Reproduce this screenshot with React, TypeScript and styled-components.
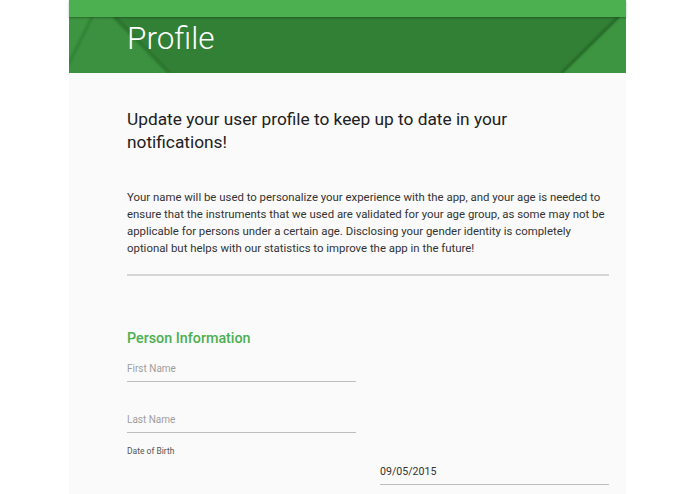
import React from 'react';
import styled, { createGlobalStyle } from 'styled-components';

const GlobalStyle = createGlobalStyle`
  html, body {
    margin: 0;
    padding: 0;
    background: #ffffff;
    font-family: Roboto, "Liberation Sans", Arial, sans-serif;
  }
`;

const Page = styled.div`
  width: 557px;
  margin-left: 69px;
  min-height: 494px;
  background: #fafafa;
  display: flex;
  flex-direction: column;
`;

const TopBar = styled.div`
  height: 17px;
  background: #4caf50;
  box-shadow: 0 1px 2px rgba(0, 0, 0, 0.3);
  position: relative;
  z-index: 2;
`;

const Header = styled.header`
  position: relative;
  height: 56px;
  background: #327f36;
  display: flex;
  align-items: center;
  padding-left: 58px;
  overflow: hidden;
`;

const HeaderArt = styled.svg`
  position: absolute;
  left: 0;
  top: 0;
  width: 557px;
  height: 56px;
`;

const Title = styled.h1`
  position: relative;
  margin: 0 0 14px;
  font-size: 31.5px;
  font-weight: 300;
  color: #ffffff;
`;

const Body = styled.main`
  padding: 35px 17px 0 58px;
  display: flex;
  flex-direction: column;
`;

const Lead = styled.h2`
  margin: 0;
  font-size: 17.3px;
  line-height: 23px;
  font-weight: 400;
  color: #212121;
  padding-right: 30px;
`;

const Intro = styled.p`
  margin: 35px 0 0;
  font-size: 11.4px;
  line-height: 17px;
  color: #333333;
`;

const Divider = styled.hr`
  margin: 17px 0 0;
  border: none;
  height: 2px;
  background: #d6d6d6;
`;

const SectionTitle = styled.h3`
  margin: 52px 0 0;
  font-size: 14.3px;
  line-height: 20px;
  font-weight: 500;
  color: #4caf50;
`;

const Fields = styled.div`
  display: grid;
  grid-template-columns: 229px 229px;
  column-gap: 24px;
  margin-top: 14px;
`;

const Field = styled.div<{ $col?: number; $row: number; $gap?: number; $filled?: boolean }>`
  grid-column: ${(p) => p.$col ?? 1};
  grid-row: ${(p) => p.$row};
  margin-top: ${(p) => p.$gap ?? 0}px;
  font-size: ${(p) => (p.$filled ? 10.6 : 10)}px;
  line-height: 14px;
  padding-bottom: 5px;
  border-bottom: 1px solid #bdbdbd;
  color: ${(p) => (p.$filled ? '#333333' : '#9e9e9e')};
`;

const SmallLabel = styled.div`
  grid-column: 1;
  grid-row: 3;
  margin-top: 12px;
  font-size: 8.5px;
  line-height: 12px;
  color: #555555;
`;

export default function App() {
  return (
    <>
      <GlobalStyle />
      <Page>
        <TopBar />
        <Header>
          <HeaderArt viewBox="0 0 557 56" preserveAspectRatio="none">
            <defs>
              <filter id="soft" x="-20%" y="-20%" width="140%" height="140%">
                <feGaussianBlur stdDeviation="1" />
              </filter>
            </defs>
            <polygon points="0,0 46,0 101,56 0,56" fill="#3b9140" />
            <polygon points="0,0 24,0 0,48" fill="#3d9441" />
            <polygon points="551,0 557,0 557,56 494,56" fill="#3d9441" />
            <line x1="45" y1="0" x2="100" y2="56" stroke="#1b5a1e" strokeWidth="2.5" opacity="0.55" filter="url(#soft)" />
            <line x1="23" y1="0" x2="-1" y2="48" stroke="#1b5a1e" strokeWidth="2" opacity="0.45" filter="url(#soft)" />
            <line x1="549.5" y1="0" x2="492.5" y2="56" stroke="#1b5a1e" strokeWidth="2.5" opacity="0.6" filter="url(#soft)" />
          </HeaderArt>
          <Title>Profile</Title>
        </Header>
        <Body>
          <Lead>Update your user profile to keep up to date in your notifications!</Lead>
          <Intro>
            Your name will be used to personalize your experience with the app, and your age is needed to
            ensure that the instruments that we used are validated for your age group, as some may not be
            applicable for persons under a certain age. Disclosing your gender identity is completely
            optional but helps with our statistics to improve the app in the future!
          </Intro>
          <Divider />
          <SectionTitle>Person Information</SectionTitle>
          <Fields>
            <Field $row={1}>First Name</Field>
            <Field $row={2} $gap={31}>Last Name</Field>
            <SmallLabel>Date of Birth</SmallLabel>
            <Field $row={4} $col={2} $gap={8} $filled>09/05/2015</Field>
          </Fields>
        </Body>
      </Page>
    </>
  );
}
